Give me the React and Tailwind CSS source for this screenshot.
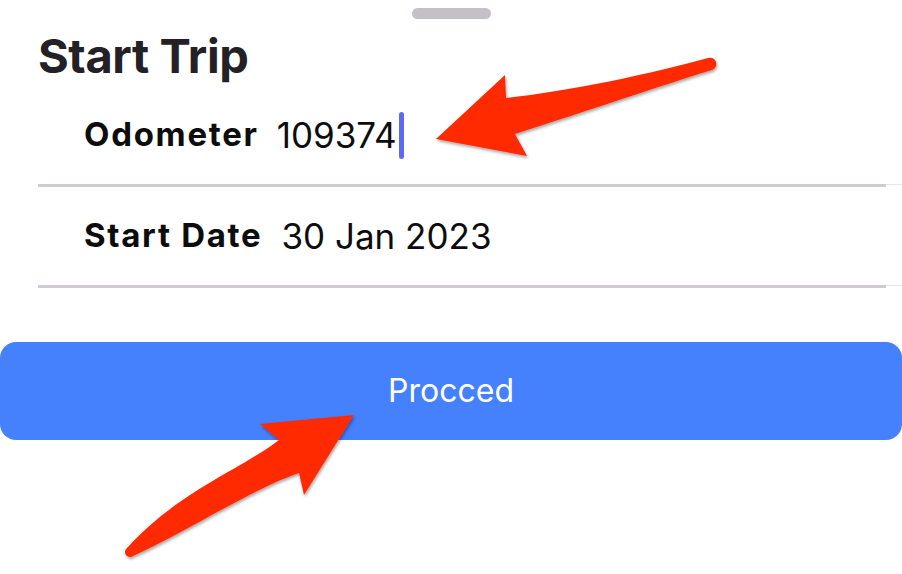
import React from "react";

function Divider() {
  return (
    <div className="flex items-start ml-[38px]">
      <div className="flex-1 h-[3px] bg-[#cfcbd1]" />
      <div className="w-[16px] h-[1px] bg-[#e6e4e7]" />
    </div>
  );
}

function Row({ label, children }) {
  return (
    <div className="flex items-center h-[98px] pl-[84px]">
      <span className="text-[33px] font-bold text-[#0d0d0d] tracking-[1.7px]">{label}</span>
      {children}
    </div>
  );
}

function Arrows() {
  return (
    <svg className="absolute inset-0 pointer-events-none" width="902" height="574" viewBox="0 0 902 574">
      <defs>
        <filter id="sh" x="-10%" y="-10%" width="120%" height="130%">
          <feDropShadow dx="1" dy="2" stdDeviation="1.5" floodColor="#000" floodOpacity="0.35" />
        </filter>
      </defs>
      <g fill="#ff2a00" filter="url(#sh)">
        <path d="M708 58 C650 74 570 91 506 98 L505 75 L436 139 L527 156 L515 134 C590 110 660 86 712 70 A6 6 0 0 0 708 58 Z" />
        <path d="M127 548 C180 490 240 470 279 440 L260 424 L354 415 L304 495 L299 473 C250 490 190 530 133 556 A5 5 0 0 1 127 548 Z" />
      </g>
    </svg>
  );
}

export default function App() {
  return (
    <div className="relative w-[902px] h-[574px] bg-white overflow-hidden font-['Inter',sans-serif]">
      <div className="pt-[8px] flex justify-center">
        <div className="w-[79px] h-[11px] rounded-full bg-[#c4c0c5]" />
      </div>
      <h1 className="mt-[13px] pl-[38px] text-[47px] leading-none font-bold text-[#232125] tracking-[-0.4px]">
        Start Trip
      </h1>
      <div className="mt-[7px]">
        <Row label="Odometer">
          <span className="ml-[18px] text-[35px] text-[#0d0d0d]">109374</span>
          <span className="ml-[2px] w-[5px] h-[47px] rounded-full bg-[#5b6cf0]" />
        </Row>
        <Divider />
        <Row label="Start Date">
          <span className="ml-[19px] text-[35px] text-[#0d0d0d]">30 Jan 2023</span>
        </Row>
        <Divider />
      </div>
      <button className="mt-[54px] w-full h-[98px] rounded-[16px] bg-[#4580fd] text-white text-[32px] flex items-center justify-center">
        Procced
      </button>
      <Arrows />
    </div>
  );
}
